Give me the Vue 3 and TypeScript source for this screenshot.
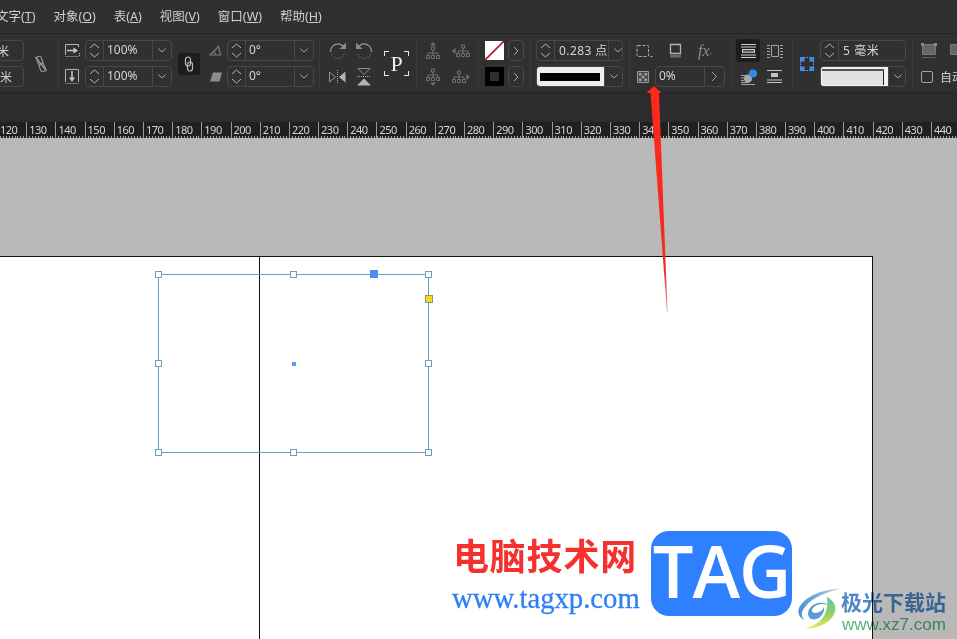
<script setup lang="ts">
const menus = [
  { label: '文字', key: 'T' },
  { label: '对象', key: 'O' },
  { label: '表', key: 'A' },
  { label: '视图', key: 'V' },
  { label: '窗口', key: 'W' },
  { label: '帮助', key: 'H' },
]
const rulerMarks: number[] = []
for (let n = 120; n <= 450; n += 10) rulerMarks.push(n)
</script>

<template>
  <div class="app">
    <svg class="defs" width="0" height="0">
      <defs>
        <symbol id="step" viewBox="0 0 17 19">
          <path d="M4 7 8.500 3 13 7M4 12l4.500 4 4.500-4" fill="none" stroke="#b5b5b5" stroke-width="1" />
        </symbol>
        <symbol id="down" viewBox="0 0 19 19">
          <path d="M5.500 7.500 9.500 11l4-3.500" fill="none" stroke="#a8a8a8" stroke-width="1" />
        </symbol>
        <symbol id="tree" viewBox="0 0 14 14">
          <path d="M5.500 1h3v3h-3zM7 4v3M2 9V7h10v2M7 7v2M.5 9.500h3v3h-3zM5.500 9.500h3v3h-3zM10.500 9.500h3v3h-3z" fill="none" stroke="#707070" stroke-width="1" />
        </symbol>
        <symbol id="rot" viewBox="0 0 18 18">
          <path d="M1.500 10C1.500 5 5 2 9 2c3 0 5 1.500 6.500 4" fill="none" stroke="#8a8a8a" stroke-width="1.400" />
          <path d="M2.500 12c1 2.500 3.500 4.500 6.500 4.500s5.500-2.500 6.500-6" fill="none" stroke="#7d7d7d" stroke-dasharray="1 1.500" />
          <path d="M17 .5V7h-6.500z" fill="#8a8a8a" />
        </symbol>
      </defs>
    </svg>

    <nav class="menubar">
      <span v-for="m in menus" :key="m.key" class="menu">{{ m.label }}(<u>{{ m.key }}</u>)</span>
    </nav>

    <section class="toolbar">
      <div class="field cut one"><span>0 毫米</span></div>
      <div class="field cut two"><span>0 毫米</span></div>

      <div class="span center">
        <svg width="14" height="18" viewBox="0 0 14 18" fill="none" stroke="#9a9a9a" stroke-width="1.100">
          <g transform="rotate(-20 7 9)">
            <rect x="4.500" y="1" width="5" height="8.500" rx="2.500" />
            <rect x="4.500" y="8.500" width="5" height="8.500" rx="2.500" />
          </g>
          <path d="M1.500 2 12.500 16" stroke-width="1.400" />
        </svg>
      </div>
      <i class="sep span"></i>

      <div class="icon">
        <svg width="15" height="14" viewBox="0 0 15 14" fill="none">
          <path d="M.5 11V.5h13v2.500" stroke="#b5b5b5" />
          <path d="M.5 12.500h14M14.500 9v4" stroke="#b5b5b5" stroke-dasharray="1 1" />
          <path d="M2 6.500h7" stroke="#c8c8c8" stroke-width="1.600" />
          <path d="M8.500 3.500l4.500 3-4.500 3z" fill="#c8c8c8" />
        </svg>
      </div>
      <div class="icon">
        <svg width="14" height="15" viewBox="0 0 14 15" fill="none">
          <path d="M.5 13V.5h13V13" stroke="#b5b5b5" />
          <path d="M.5 14.500h13" stroke="#b5b5b5" stroke-dasharray="1 1" />
          <path d="M7 2v7" stroke="#c8c8c8" stroke-width="1.600" />
          <path d="M4 8.500h6l-3 4.500z" fill="#c8c8c8" />
        </svg>
      </div>

      <div class="field spin"><svg class="stepper"><use href="#step" /></svg><b>100%</b><svg class="drop"><use href="#down" /></svg></div>
      <div class="field spin"><svg class="stepper"><use href="#step" /></svg><b>100%</b><svg class="drop"><use href="#down" /></svg></div>

      <div class="span center">
        <div class="chain">
          <svg width="10" height="16" viewBox="0 0 10 16" fill="none" stroke="#b9b9b9" stroke-width="1.200">
            <rect x="1.500" y="1" width="5" height="9" rx="2.500" />
            <rect x="3.500" y="6" width="5" height="9" rx="2.500" />
          </svg>
        </div>
      </div>

      <div class="icon shear-l">
        <svg width="13" height="11" viewBox="0 0 13 11" fill="none" stroke="#7d7d7d" stroke-width="1.200">
          <path d="M1 10 9.500 1.500 11.500 10zM6.500 10c0-1.500-.5-2.500-1.500-3" />
        </svg>
      </div>
      <div class="icon shear-l">
        <svg width="12" height="10" viewBox="0 0 12 10"><path d="M3 .5h9L9.500 9.500H0z" fill="#8c8c8c" /></svg>
      </div>

      <div class="field spin"><svg class="stepper"><use href="#step" /></svg><b>0°</b><svg class="drop"><use href="#down" /></svg></div>
      <div class="field spin"><svg class="stepper"><use href="#step" /></svg><b>0°</b><svg class="drop"><use href="#down" /></svg></div>

      <i class="sep span tight"></i>

      <div class="icon"><svg width="18" height="18"><use href="#rot" /></svg></div>
      <div class="icon">
        <svg width="17" height="14" viewBox="0 0 17 14">
          <path d="M.5 2v10l6-5z" fill="none" stroke="#8f8f8f" />
          <path d="M16.500 1.500v11l-6.500-5.500z" fill="#b4b4b4" />
          <path d="M8.500 0v14" stroke="#a8a8a8" stroke-dasharray="1 1" />
        </svg>
      </div>
      <div class="icon"><svg class="mirror" width="18" height="18"><use href="#rot" /></svg></div>
      <div class="icon">
        <svg width="16" height="18" viewBox="0 0 16 18">
          <path d="M2 .5h12L8 6.500z" fill="none" stroke="#8f8f8f" />
          <path d="M1 8.500h14" stroke="#a8a8a8" stroke-dasharray="1 1" />
          <path d="M8 10.500l7 7H1z" fill="#b4b4b4" />
        </svg>
      </div>

      <div class="span center">
        <div class="proxy"><i class="c tl"></i><i class="c tr"></i><i class="c bl"></i><i class="c br"></i><span>P</span></div>
      </div>
      <i class="sep span"></i>

      <div class="icon"><svg width="14" height="18" viewBox="0 0 14 18"><path d="M4 3.500 7 0l3 3.500z" fill="#707070" /><use href="#tree" x="0" y="4" width="14" height="14" /></svg></div>
      <div class="icon"><svg width="14" height="18" viewBox="0 0 14 18"><use href="#tree" x="0" y="0" width="14" height="14" /><path d="M4 14.500 7 18l3-3.500z" fill="#707070" /></svg></div>
      <div class="icon"><svg width="18" height="14" viewBox="0 0 18 14"><path d="M3.500 4 0 7l3.500 3z" fill="#707070" /><use href="#tree" x="4" y="0" width="14" height="14" /></svg></div>
      <div class="icon"><svg width="18" height="14" viewBox="0 0 18 14"><use href="#tree" x="0" y="0" width="14" height="14" /><path d="M14.500 4 18 7l-3.500 3z" fill="#707070" /></svg></div>

      <i class="sep span tight"></i>

      <div class="swatch none"><svg width="19" height="19" viewBox="0 0 19 19"><path d="M0 19 19 0" stroke="#b3202a" stroke-width="1.800" /></svg></div>
      <div class="swatch black"><i></i></div>
      <div class="arrow-btn"><svg width="8" height="10" viewBox="0 0 8 10"><path d="m2 1 4 4-4 4" fill="none" stroke="#a8a8a8" /></svg></div>
      <div class="arrow-btn"><svg width="8" height="10" viewBox="0 0 8 10"><path d="m2 1 4 4-4 4" fill="none" stroke="#a8a8a8" /></svg></div>

      <i class="sep span tight"></i>

      <div class="field spin wide-text"><svg class="stepper"><use href="#step" /></svg><b>0.283 点</b><svg class="drop"><use href="#down" /></svg></div>
      <div class="field stroke"><div class="stroke-prev"><i></i></div><svg class="drop"><use href="#down" /></svg></div>

      <i class="sep span tight"></i>

      <div class="span fx">
        <div class="fx-row">
          <div class="slot s22">
            <svg width="17" height="14" viewBox="0 0 17 14" fill="none" stroke="#b0b0b0">
              <path d="M2 1.500h9.500a1 1 0 0 1 1 1v9a1 1 0 0 1-1 1H2a1 1 0 0 1-1-1v-9a1 1 0 0 1 1-1z" stroke-dasharray="3 1.500" />
              <path d="M14.500 12.500h2" />
            </svg>
          </div>
          <div class="slot s40">
            <svg width="13" height="15" viewBox="0 0 13 15"><path d="M1.500 1.500h10v9h-10z" fill="none" stroke="#b4b4b4" stroke-width="1.300" /><path d="M1 12h11v2.500H1z" fill="#6a6a6a" /></svg>
          </div>
          <div class="slot s20"><em class="fxt">fx</em><small class="dot">.</small></div>
        </div>
        <div class="fx-row">
          <div class="slot s22 checker">
            <svg width="12" height="12" viewBox="0 0 12 12">
              <path d="M.5.500h11v11H.500z" fill="#4a4a4a" stroke="#9a9a9a" />
              <path d="M2 2h2.500v2.500H2zM7.500 2H10v2.500H7.500zM4.750 4.750h2.500v2.500h-2.500zM2 7.500h2.500V10H2zM7.500 7.500H10V10H7.500z" fill="#a0a0a0" />
            </svg>
          </div>
          <div class="field opacity"><b>0%</b><svg width="19" height="19" viewBox="0 0 19 19"><path d="m7 5 4.500 4.500L7 14" fill="none" stroke="#a0a0a0" /></svg></div>
        </div>
      </div>

      <i class="sep span tight"></i>

      <div class="wrap sel">
        <svg width="15" height="14" viewBox="0 0 15 14" fill="#d0d0d0">
          <path d="M0 0h15v1H0zM0 13h15v1H0zM0 2.500h15v1H0zM0 10.500h15v1H0zM1 5h13v4H1z" />
          <path d="M2 6h11v.7H2zM2 7.500h11v.7H2z" fill="#1e1e1e" />
        </svg>
      </div>
      <div class="wrap">
        <svg width="16" height="16" viewBox="0 0 16 16">
          <path d="M0 6.500h5M0 9h3M0 11.500h3M0 13.500h8M0 15.500h14" fill="none" stroke="#a5a5a5" />
          <circle cx="7" cy="9.500" r="4" fill="#a9a9a9" />
          <circle cx="12" cy="4.500" r="4" fill="#2f8bea" />
        </svg>
      </div>
      <div class="wrap">
        <svg width="16" height="14" viewBox="0 0 16 14" fill="none" stroke="#a5a5a5">
          <path d="M4.500 1.500h7v11h-7zM0 1.500h3M0 4.500h3M0 7.500h3M0 10.500h3M0 13.500h3M13 1.500h3M13 4.500h3M13 7.500h3M13 10.500h3M13 13.500h3" />
        </svg>
      </div>
      <div class="wrap">
        <svg width="16" height="13" viewBox="0 0 16 13" fill="#c4c4c4"><path d="M0 0h15v1H0zM0 12h15v1H0zM0 9.500h15v1H0z" /><path d="M4 3h7v4H4z" /></svg>
      </div>

      <i class="sep span tight"></i>

      <div class="span center spacing">
        <svg width="14" height="14" viewBox="0 0 14 14">
          <path d="M4 .5h6M4 13.500h6M.5 4v6M13.500 4v6" stroke="#9a9a9a" stroke-dasharray="1.500 1" />
          <path d="M0 0h4.500v4.500H0zM9.500 0H14v4.500H9.500zM0 9.500h4.500V14H0zM9.500 9.500H14V14H9.500z" fill="#3d8ee8" />
        </svg>
      </div>

      <div class="field spin mm"><svg class="stepper"><use href="#step" /></svg><b>5 毫米</b></div>
      <div class="field stroke preview"><div class="wrap-prev"></div><svg class="drop"><use href="#down" /></svg></div>

      <i class="sep span tight"></i>

      <div class="tail">
        <div class="tail-row">
          <svg width="16" height="16" viewBox="0 0 16 16"><path d="M1.500 1.500h13v10h-13z" fill="#666" stroke="#7a7a7a" /><path d="M1.500 14.500h13" stroke="#777" stroke-dasharray="2 1" /><path d="M0 0h3v3H0zM13 0h3v3h-3z" fill="#8a8a8a" /></svg>
          <svg width="16" height="16" viewBox="0 0 16 16"><path d="M1.500 1.500h13v10h-13z" fill="#666" stroke="#7a7a7a" /></svg>
        </div>
        <div class="tail-row lower">
          <i class="check"></i><span class="auto">自动</span>
        </div>
      </div>
    </section>

    <div class="strip"></div>

    <div class="ruler">
      <span v-for="n in rulerMarks" :key="n" class="mark">{{ n }}</span>
    </div>

    <main class="canvas">
      <div class="page"><i class="spine"></i></div>

      <div class="frame-box">
        <i class="h" style="left:-4px;top:-4px"></i>
        <i class="h" style="left:131px;top:-4px"></i>
        <i class="h" style="left:266px;top:-4px"></i>
        <i class="h" style="left:-4px;top:85px"></i>
        <i class="h" style="left:266px;top:85px"></i>
        <i class="h" style="left:-4px;top:174px"></i>
        <i class="h" style="left:131px;top:174px"></i>
        <i class="h" style="left:266px;top:174px"></i>
        <i class="blue"></i>
        <i class="yellow"></i>
        <i class="center-dot"></i>
      </div>

      <div class="brand-cn">电脑技术网</div>
      <div class="brand-url">www.tagxp.com</div>
      <div class="tag">TAG</div>

      <div class="xz">
        <svg class="swirl" width="44" height="42" viewBox="0 0 44 42">
          <defs>
            <linearGradient id="gb" x1="0" y1="0" x2="1" y2="0"><stop offset="0" stop-color="#4e8fd0" /><stop offset="1" stop-color="#b8d6ee" /></linearGradient>
            <linearGradient id="gg" x1="0" y1="0" x2="0" y2="1"><stop offset="0" stop-color="#57c2a5" /><stop offset=".6" stop-color="#9fd45e" /><stop offset="1" stop-color="#f0e55f" /></linearGradient>
          </defs>
          <path d="M44 1C26 1 8 8 2 20c-2 5 1 10 5 12-3-4-3-8 1-13C15 10 28 4 44 1z" fill="url(#gb)" />
          <path d="M12 29c-3-5 1-12 9-14 6-1 9 1 10 2-5-2-12-1-15 3-2 2-1 5 2 5 4 0 8-3 9-6 1 5-3 11-8 12-3 1-6 0-7-2z" fill="#5b9ad6" />
          <path d="M30 9c8 4 11 12 6 19-5 8-15 12-28 13 9-3 17-8 20-15 2-5 3-11 2-17z" fill="url(#gg)" />
        </svg>
        <div class="xz-cn">极光下载站</div>
        <div class="xz-url">www.xz7.com</div>
      </div>

      <svg class="red-arrow" width="30" height="230" viewBox="0 0 30 230">
        <defs>
          <linearGradient id="ra" x1="0" y1="0" x2="0" y2="1">
            <stop offset="0" stop-color="#ff2a1c" />
            <stop offset=".8" stop-color="#f22a1e" />
            <stop offset="1" stop-color="#e9857d" />
          </linearGradient>
        </defs>
        <path d="M9 0 16.500 7 14 7 22.500 226 22 226 5.500 7 1.500 7z" fill="url(#ra)" />
      </svg>
    </main>
  </div>
</template>

<style>
html, body { margin: 0; padding: 0; background: #b9b9b9; }
</style>

<style scoped>
.app {
  width: 957px;
  height: 639px;
  overflow: hidden;
  position: relative;
  display: flex;
  flex-direction: column;
  font-family: "Noto Sans", "Noto Sans CJK SC", sans-serif;
  background: #b9b9b9;
}
.defs { position: absolute; }
.menubar {
  height: 33px;
  flex: none;
  box-sizing: border-box;
  display: flex;
  align-items: center;
  gap: 18px;
  margin-left: -4px;
  padding-bottom: 2px;
  background: #303030;
  color: #cfcfcf;
  font-size: 12.500px;
}
.menu u { text-underline-offset: 1px; }
.toolbar {
  height: 60px;
  flex: none;
  box-sizing: border-box;
  border-top: 1px solid #232323;
  border-bottom: 1px solid #232323;
  padding-top: 6px;
  background: #303030;
  display: grid;
  grid-auto-flow: column;
  grid-template-rows: 21px 21px;
  row-gap: 5px;
  grid-template-columns:
    24px 34px 1px 26px 87px 34px 21px 87px 10px 27px 26px 39px 1px 32px 24px 10px 23px 20px 8px
    91px 8px 94px 8px 27px 26px 8px 24px 86px 12px 60px;
  color: #cfcfcf;
  font-size: 12px;
}
.span { grid-row: span 2; }
.center { display: flex; align-items: center; justify-content: center; }
.sep { display: block; justify-self: center; width: 1px; height: 48px; background: #3a3a3a; }
.icon { display: flex; align-items: center; justify-content: center; }
.shear-l svg { margin-right: 2px; }
.mirror { transform: scaleX(-1); }

.field {
  box-sizing: border-box;
  height: 21px;
  border: 1px solid #484848;
  border-radius: 4px;
  display: flex;
  align-items: center;
  overflow: hidden;
}
.field b { font-weight: 400; color: #d4d4d4; padding-bottom: 2px; }
.cut { width: 44px; margin-left: -20px; white-space: nowrap; }
.cut.two span { margin-left: -3px; }
.cut.one span { margin-left: -6px; }
.stepper { width: 17px; height: 19px; flex: none; border-right: 1px solid #484848; }
.drop { width: 18px; height: 19px; flex: none; border-left: 1px solid #484848; margin-left: auto; }
.spin { width: 87px; }
.spin b { padding-left: 3px; white-space: nowrap; }
.wide-text, .stroke { width: 87px; justify-self: center; }
.wide-text b { padding-left: 4px; letter-spacing: .4px; }
.chain {
  width: 22px;
  height: 22px;
  background: #1d1d1d;
  border-radius: 3px;
  display: flex;
  align-items: center;
  justify-content: center;
}
.proxy { position: relative; width: 25px; height: 25px; display: flex; align-items: center; justify-content: center; }
.proxy span { font-family: "Liberation Serif", serif; font-size: 22px; color: #f0f0f0; line-height: 1; }
.c { position: absolute; width: 4px; height: 4px; border: 0 solid #e8e8e8; }
.tl { left: 0; top: 0; border-width: 1px 0 0 1px; }
.tr { right: 0; top: 0; border-width: 1px 1px 0 0; }
.bl { left: 0; bottom: 0; border-width: 0 0 1px 1px; }
.br { right: 0; bottom: 0; border-width: 0 1px 1px 0; }
.swatch { width: 19px; height: 19px; justify-self: center; align-self: center; }
.swatch svg { display: block; }
.swatch.none { background: #fff; }
.swatch.black { background: #000; display: flex; align-items: center; justify-content: center; }
.swatch.black i { width: 9px; height: 9px; background: #2e2e2e; }
.arrow-btn {
  box-sizing: border-box;
  width: 16px;
  height: 21px;
  justify-self: center;
  border: 1px solid #484848;
  border-radius: 4px;
  display: flex;
  align-items: center;
  justify-content: center;
}
.stroke-prev {
  width: 68px;
  height: 21px;
  flex: none;
  margin: -1px 0 -1px -1px;
  background: #efefef;
  display: flex;
  align-items: center;
  justify-content: center;
}
.stroke-prev i { width: 60px; height: 8px; background: #000; }
.fx { display: flex; flex-direction: column; gap: 5px; }
.fx-row { display: flex; height: 21px; align-items: center; }
.slot { display: flex; align-items: center; justify-content: center; }
.s22 { width: 22px; }
.s40 { width: 40px; }
.s20 { width: 20px; }
.checker { justify-content: flex-start; padding-left: 4px; box-sizing: border-box; }
.fxt { font-family: "Liberation Serif", serif; font-size: 16px; color: #8c8c8c; }
.dot { font-size: 9px; color: #9a9a9a; }
.opacity { width: 70px; }
.opacity b { padding-left: 3px; width: 47px; }
.opacity svg { border-left: 1px solid #484848; flex: none; }
.wrap { display: flex; align-items: center; justify-content: center; }
.sel { width: 24px; height: 23px; margin: -1px 0 -1px 1px; background: #1d1d1d; border-radius: 3px; }
.spacing { padding-right: 2px; }
.mm { width: 86px; }
.mm b { letter-spacing: .6px; padding-left: 4px; }
.preview { width: 86px; justify-self: start; }
.wrap-prev {
  box-sizing: border-box;
  width: 68px;
  height: 21px;
  flex: none;
  margin: -1px 0 -1px -1px;
  background: #e2e2e2;
  border: 2px solid #f2f2f2;
  border-top-width: 3px;
  border-right-width: 4px;
  box-shadow: inset 0 2px 0 #555, inset -1px 0 0 #222;
}
.tail { grid-row: span 2; padding-left: 3px; display: flex; flex-direction: column; gap: 5px; white-space: nowrap; }
.tail-row { height: 21px; display: flex; align-items: center; gap: 12px; }
.lower { gap: 7px; }
.check { box-sizing: border-box; width: 12px; height: 12px; border: 1px solid #a4a4a4; border-radius: 2px; flex: none; }
.auto { color: #cfcfcf; font-size: 12px; }

.strip { height: 29px; flex: none; background: #2c2c2c; }
.ruler {
  height: 16px;
  flex: none;
  display: flex;
  margin-left: -3px;
  background-color: #202020;
  background-image: repeating-linear-gradient(90deg, #a9a9a9 0 1px, transparent 1px 2.92px);
  background-size: 100% 2px;
  background-position: 0 100%;
  background-repeat: no-repeat;
  overflow: hidden;
}
.mark {
  flex: none;
  box-sizing: border-box;
  width: 29.190px;
  border-left: 1px solid #9a9a9a;
  padding-left: 2px;
  font-size: 11px;
  letter-spacing: -.5px;
  line-height: 15px;
  color: #d6d6d6;
}

.canvas { flex: 1; position: relative; background: #b9b9b9; }
.page {
  position: absolute;
  left: -2px;
  top: 118px;
  width: 875px;
  height: 400px;
  box-sizing: border-box;
  background: #fff;
  border: 1px solid #111;
  border-bottom: 0;
}
.spine { position: absolute; left: 260px; top: 0; bottom: 0; width: 1px; background: #111; }
.frame-box {
  position: absolute;
  left: 158px;
  top: 136px;
  width: 271px;
  height: 179px;
  box-sizing: border-box;
  border: 1px solid #6a9fc0;
}
.h { position: absolute; width: 7px; height: 7px; box-sizing: border-box; background: #fff; border: 1px solid #6a9fc0; }
.blue { position: absolute; left: 211px; top: -5px; width: 8px; height: 8px; background: #4a90ee; }
.yellow { position: absolute; left: 266px; top: 20px; width: 8px; height: 8px; background: #f7dc14; border: 1px solid #7d9a90; box-sizing: border-box; }
.center-dot { position: absolute; left: 133px; top: 87px; width: 4px; height: 4px; background: #5a9cf0; }

.brand-cn {
  position: absolute;
  left: 453px;
  top: 392px;
  font-family: "Noto Sans CJK SC", sans-serif;
  font-weight: 700;
  font-size: 36px;
  letter-spacing: .8px;
  line-height: 48px;
  color: #f6302f;
  white-space: nowrap;
}
.brand-url {
  position: absolute;
  left: 452px;
  top: 444px;
  font-family: "Liberation Serif", serif;
  font-size: 28.700px;
  line-height: 32px;
  color: #2f7ff6;
  white-space: nowrap;
  -webkit-text-stroke: .3px #2f7ff6;
}
.tag {
  position: absolute;
  left: 651px;
  top: 393px;
  width: 141px;
  height: 85px;
  border-radius: 18px;
  background: #2f80ff;
  color: #fff;
  font-family: "Open Sans", sans-serif;
  font-weight: 600;
  font-size: 72px;
  line-height: 79px;
  text-align: center;
  letter-spacing: -1px;
}
.xz { position: absolute; left: 797px; top: 449px; width: 160px; height: 52px; mix-blend-mode: multiply; }
.swirl { position: absolute; left: 0; top: 1px; }
.xz-cn {
  position: absolute;
  left: 44px;
  top: 0;
  font-family: "Noto Sans CJK SC", sans-serif;
  font-weight: 700;
  font-size: 21px;
  line-height: 28px;
  color: #4f88c8;
  white-space: nowrap;
}
.xz-url {
  position: absolute;
  left: 45px;
  top: 27px;
  font-family: "Liberation Sans", sans-serif;
  font-size: 17px;
  line-height: 22px;
  color: #55b47a;
  white-space: nowrap;
}
.red-arrow { position: absolute; left: 645px; top: -52px; }
</style>
